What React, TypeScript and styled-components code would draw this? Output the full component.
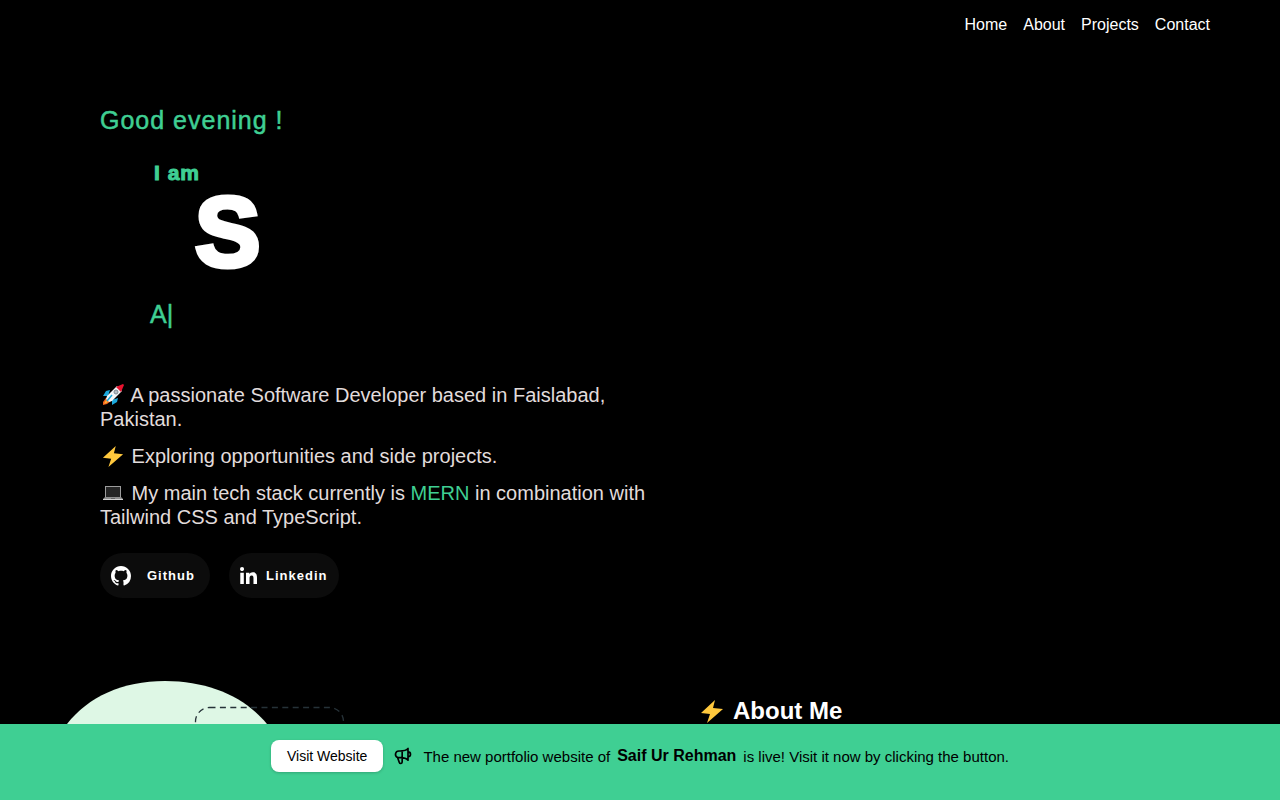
import React from 'react';
import styled, { createGlobalStyle } from 'styled-components';

const GlobalStyle = createGlobalStyle`
  * { box-sizing: border-box; }
  body {
    margin: 0;
    background: #000;
    color: #fff;
    font-family: "Liberation Sans", Arial, sans-serif;
    overflow: hidden;
  }
  h1, h2, h3, p { margin: 0; }
`;

const green = '#3fcf93';

const Page = styled.div`
  height: 100vh;
  overflow: hidden;
`;

const Nav = styled.nav`
  display: flex;
  justify-content: flex-end;
  gap: 16px;
  height: 50px;
  padding-right: 70px;
  align-items: center;
`;

const NavLink = styled.a`
  color: #fff;
  font-size: 16px;
  line-height: 24px;
  text-decoration: none;
`;

const Hero = styled.header`
  display: grid;
  grid-template-columns: 1fr 1fr;
  padding: 54px 80px 0 100px;
`;

const Greeting = styled.h2`
  color: ${green};
  font-size: 25px;
  font-weight: 400;
  line-height: 32px;
  letter-spacing: 1px;
  -webkit-text-stroke: 0.5px ${green};
`;

const Intro = styled.div`
  padding: 24px 0 0 54px;
`;

const IAm = styled.p`
  color: ${green};
  font-size: 21px;
  font-weight: 900;
  line-height: 26px;
  letter-spacing: 1px;
  -webkit-text-stroke: 1px ${green};
`;

const Initial = styled.h1`
  padding-left: 41px;
  font-size: 98px;
  font-weight: 900;
  line-height: 92px;
  -webkit-text-stroke: 5px #fff;
`;

const Typed = styled.p`
  padding: 20px 0 0 50px;
  color: ${green};
  font-size: 25px;
  line-height: 32px;
  -webkit-text-stroke: 0.5px ${green};
`;

const Facts = styled.div`
  display: flex;
  flex-direction: column;
  gap: 13px;
  padding-top: 53px;
  color: #e2dcdc;
  font-size: 20px;
  line-height: 24px;
`;

const Fact = styled.p`
  svg {
    margin: 0 2px;
    vertical-align: -4px;
  }
`;

const Accent = styled.span`
  color: ${green};
`;

const Socials = styled.div`
  display: flex;
  gap: 19px;
  padding-top: 24px;
`;

const SocialLink = styled.a`
  display: flex;
  align-items: center;
  width: 110px;
  height: 45px;
  padding-left: 11px;
  border-radius: 24px;
  background: #0c0c0c;
  color: #fff;
  font-size: 13px;
  font-weight: 700;
  letter-spacing: 1px;
  text-decoration: none;
`;

const SocialLabel = styled.span<{ $gap: number }>`
  margin-left: ${({ $gap }) => $gap}px;
`;

const About = styled.section`
  display: grid;
  grid-template-columns: 1fr 1fr;
  padding: 82px 0 0 60px;
`;

const Art = styled.svg`
  display: block;
`;

const AboutTitle = styled.h2`
  display: flex;
  align-items: center;
  gap: 9px;
  height: 32px;
  margin: 15px 0 0 30px;
  font-size: 24px;
  line-height: 32px;
`;

const Banner = styled.aside`
  position: fixed;
  right: 0;
  bottom: 0;
  left: 0;
  display: flex;
  justify-content: center;
  align-items: flex-start;
  height: 76px;
  padding-top: 16px;
  background: ${green};
  color: #000;
`;

const VisitButton = styled.button`
  height: 32px;
  padding: 0 16px;
  border: 0;
  border-radius: 8px;
  background: #fff;
  color: #000;
  box-shadow: 0 1px 3px rgba(0, 0, 0, 0.2);
  font-family: inherit;
  font-size: 14px;
`;

const Message = styled.p`
  display: flex;
  align-items: center;
  height: 32px;
  padding-left: 10px;
  font-size: 15px;

  svg { margin-right: 10px; }
  strong {
    margin: 0 7px;
    font-size: 16px;
  }
`;

function Rocket() {
  return (
    <svg width="22" height="22" viewBox="0 0 22 22" role="img" aria-label="rocket">
      <path d="M8 6L4 7 1 12l5 0zM16 14l-1 4-5 3 0-5z" fill="#1ba8dc" />
      <path d="M4 14L1 18l0 3 4-1 4-3z" fill="#f4631e" />
      <path d="M4 16l-2 4 4-2z" fill="#ffb636" />
      <path d="M15 2L5 12l-1 3 3 3 3-1L20 7z" fill="#f3f6f8" />
      <path d="M14 3l7-3 1 1-3 7z" fill="#e8132f" />
      <circle cx="14" cy="8" r="2" fill="#b8bfc5" stroke="#7f8b94" />
      <path d="M5 17l5-6" stroke="#1ba8dc" strokeWidth="1.5" />
    </svg>
  );
}

function Bolt({ size }: { size: number }) {
  return (
    <svg width={size} height={size} viewBox="0 0 24 24" role="img" aria-label="lightning">
      <path d="M15 1L1 14l9 1-3 9L23 10l-10-1z" fill="#ffc83d" />
    </svg>
  );
}

function Laptop() {
  return (
    <svg width="22" height="22" viewBox="0 0 22 22" role="img" aria-label="laptop">
      <path d="M3 4h16v12H3z" fill="#9c9c9c" />
      <path d="M4 5h14v10H4z" fill="#242424" />
      <path d="M3 15h16l2 2H1z" fill="#8d8d8d" />
      <path d="M1 17h20v1H1z" fill="#cfcfcf" />
      <path d="M9 16h4v1H9z" fill="#666" />
    </svg>
  );
}

export default function App() {
  return (
    <Page>
      <GlobalStyle />
      <Nav>
        <NavLink href="#home">Home</NavLink>
        <NavLink href="#about">About</NavLink>
        <NavLink href="#projects">Projects</NavLink>
        <NavLink href="#contact">Contact</NavLink>
      </Nav>
      <Hero id="home">
        <div>
          <Greeting>Good evening !</Greeting>
          <Intro>
            <IAm>I am</IAm>
            <Initial>S</Initial>
          </Intro>
          <Typed>A|</Typed>
          <Facts>
            <Fact><Rocket /> A passionate Software Developer based in Faislabad, Pakistan.</Fact>
            <Fact><Bolt size={22} /> Exploring opportunities and side projects.</Fact>
            <Fact><Laptop /> My main tech stack currently is <Accent>MERN</Accent> in combination with Tailwind CSS and TypeScript.</Fact>
          </Facts>
          <Socials>
            <SocialLink href="#github">
              <svg width="20" height="20" viewBox="0 0 16 16" fill="#fff" aria-hidden="true">
                <path d="M8 0C3.58 0 0 3.58 0 8c0 3.54 2.29 6.53 5.47 7.59.4.07.55-.17.55-.38 0-.19-.01-.82-.01-1.49-2.01.37-2.53-.49-2.69-.94-.09-.23-.48-.94-.82-1.13-.28-.15-.68-.52-.01-.53.63-.01 1.08.58 1.23.82.72 1.21 1.87.87 2.33.66.07-.52.28-.87.51-1.07-1.78-.2-3.64-.89-3.64-3.95 0-.87.31-1.59.82-2.15-.08-.2-.36-1.02.08-2.12 0 0 .67-.21 2.2.82.64-.18 1.32-.27 2-.27s1.36.09 2 .27c1.53-1.04 2.2-.82 2.2-.82.44 1.1.16 1.92.08 2.12.51.56.82 1.27.82 2.15 0 3.07-1.87 3.75-3.65 3.95.29.25.54.73.54 1.48 0 1.07-.01 1.93-.01 2.2 0 .21.15.46.55.38A8.01 8.01 0 0 0 16 8c0-4.42-3.58-8-8-8z" />
              </svg>
              <SocialLabel $gap={16}>Github</SocialLabel>
            </SocialLink>
            <SocialLink href="#linkedin">
              <svg width="17" height="17" viewBox="0 0 448 448" fill="#fff" aria-hidden="true">
                <path d="M100.3 448H7.4V148.9h92.9zM53.8 108.1C24.1 108.1 0 83.5 0 53.8a53.8 53.8 0 0 1 107.6 0c0 29.7-24.1 54.3-53.8 54.3zM447.9 448h-92.7V302.4c0-34.7-.7-79.2-48.3-79.2-48.3 0-55.7 37.7-55.7 76.7V448h-92.8V148.9h89.1v40.8h1.3c12.4-23.5 42.7-48.3 87.9-48.3 94 0 111.3 61.9 111.3 142.3V448z" />
              </svg>
              <SocialLabel $gap={9}>Linkedin</SocialLabel>
            </SocialLink>
          </Socials>
        </div>
      </Hero>
      <About id="about">
        <Art width="300" height="120" viewBox="0 0 300 120" aria-hidden="true">
          <path d="M7 44C28 17 62 1 105 1C150 1 186 18 207 44L240 120H-20Z" fill="#def7e5" />
          <rect x="135.5" y="27.5" width="148" height="120" rx="14" fill="none" stroke="#263238" strokeWidth="1.3" strokeDasharray="6 4.4" />
        </Art>
        <AboutTitle><Bolt size={24} />About Me</AboutTitle>
      </About>
      <Banner>
        <VisitButton type="button">Visit Website</VisitButton>
        <Message>
          <svg width="20" height="20" viewBox="0 0 24 24" fill="none" stroke="#000" strokeWidth="2" strokeLinecap="round" strokeLinejoin="round" aria-hidden="true">
            <path d="M11 5.882V19.24a1.76 1.76 0 01-3.417.592l-2.147-6.15M18 13a3 3 0 100-6M5.436 13.683A4.001 4.001 0 017 6h1.832c4.1 0 7.625-1.234 9.168-3v14c-1.543-1.766-5.067-3-9.168-3H7a3.988 3.988 0 01-1.564-.317z" />
          </svg>
          The new portfolio website of <strong>Saif Ur Rehman</strong> is live! Visit it now by clicking the button.
        </Message>
      </Banner>
    </Page>
  );
}
